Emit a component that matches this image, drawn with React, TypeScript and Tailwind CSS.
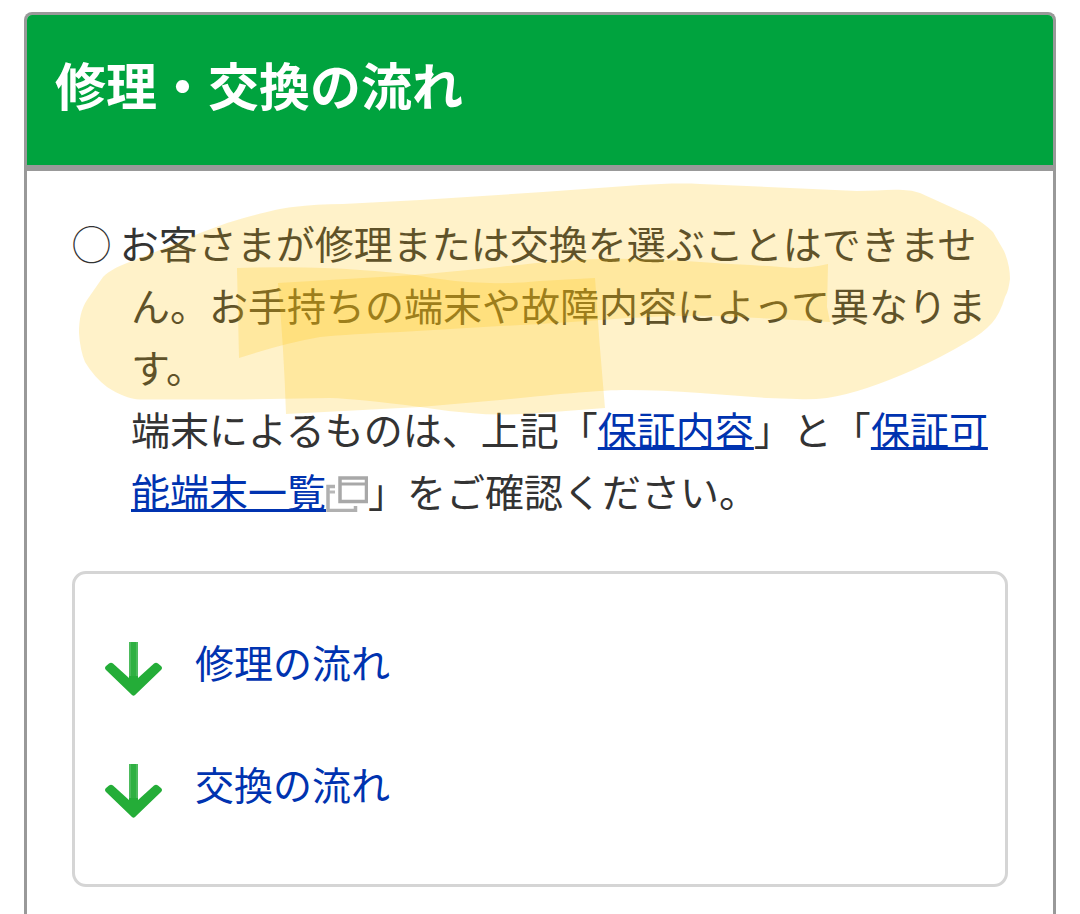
import React from "react";

const flows = [
  { id: "repair", label: "修理の流れ" },
  { id: "exchange", label: "交換の流れ" },
];

function NewWindowIcon() {
  return (
    <svg
      className="inline-block h-9 w-[42px] align-[-5px]"
      viewBox="0 0 42 36"
      fill="none"
      role="img"
      aria-label="別ウィンドウで開く"
    >
      <path d="M9 10.5H2V34.5H29.500V30" stroke="#b0b0b0" strokeWidth="3.500" />
      <path d="M3 16H9" stroke="#b8b8b8" strokeWidth="3" />
      <path d="M14 2H40.500V25.500H14Z" stroke="#a8a8a8" strokeWidth="3.500" />
      <path d="M15 8H40" stroke="#a8a8a8" strokeWidth="3" />
    </svg>
  );
}

function DownArrow() {
  return (
    <svg className="mt-3 h-[54px] w-[57px] shrink-0" viewBox="0 0 57 54" aria-hidden="true">
      <path d="M24 0H33V42H24Z" fill="#4dbb5d" />
      <path d="M26 0H31V42H26Z" fill="#2fb042" />
      <path
        d="M1 28Q-1 26 1 24L4 21.500Q6 20 8 21.500L24 36V34H33V36L49 21.500Q51 20 53 21.500L56 24Q58 26 56 28L30 53Q28.500 54.500 27 53Z"
        fill="#24ad38"
      />
    </svg>
  );
}

function Highlighter() {
  return (
    <svg
      className="pointer-events-none absolute inset-x-0 top-0 w-full"
      viewBox="27 171 1026 260"
      aria-hidden="true"
    >
      <g fill="#fdc507" fillOpacity="0.22">
        <path d="M79 333C79 320 81 309 87 300L103 277C109 271 117 267 127 263L160 250L200 233L227 223C254 215 276 209 293 207C309 205 325 204 343 204L420 200L543 192L640 185C660 184 680 183 700 184L857 191C875 191 890 189 903 190Q912 190 920 193L973 217Q985 224 993 232L1004 251C1008 260 1010 270 1010 279C1009 286 1008 292 1005 297Q1000 314 992 323Q982 334 967 342Q942 357 913 370Q888 381 867 388Q846 395 827 398Q811 400 797 399L767 398L700 393Q662 390 627 390C600 390 560 394 500 400L420 407Q360 399 330 398L240 399.500H140C130 399 119 395 107 387Q94 377 85 362Q80 350 79 333Z" />
        <path d="M237 268Q310 266 360 270Q390 272 415 275L500 267Q560 260 600 259Q640 258 700 262Q765 266 795 268Q811 268 828 264L827 307L830 322Q765 318 715 316Q670 315 600 320Q530 325 500 326L400 332Q350 334 320 337Q285 343 239 358Z" />
        <path d="M278 283L415 275Q450 282 490 283Q510 284 540 281L595 278Q599 342 605 408L540 413Q500 416 470 413Q445 411 420 407L286 414Q284 350 278 283Z" />
      </g>
    </svg>
  );
}

export default function App() {
  return (
    <main className="flex min-h-screen flex-col bg-white px-6 pt-3 font-['Noto_Sans_CJK_JP','Noto_Sans',sans-serif] text-[39px] leading-[62px] text-[#333]">
      <section className="flex grow flex-col rounded-t-lg border-[3px] border-b-0 border-[#999]">
        <header className="rounded-t-[5px] border-b-[6px] border-[#999] bg-[#00a33e] px-7 pt-7 pb-10">
          <h1 className="text-[51px] leading-[82px] font-bold text-white" lang="ja">
            修理・交換の流れ
          </h1>
        </header>

        <div className="relative px-[45px] pt-10 pb-6" lang="ja">
          <p className="pl-[59px] -indent-[59px]">
            ◯ お客さまが修理または交換を選ぶことはできません。お手持ちの端末や故障内容によって異なります。
          </p>
          <p className="pl-[59px]">
            端末によるものは、上記「
            <a href="#coverage" className="text-[#0033b0] underline decoration-[3px]">保証内容</a>
            」と「
            <a href="#devices" className="text-[#0033b0] underline decoration-[3px]">保証可能端末一覧</a>
            <NewWindowIcon />
            」をご確認ください。
          </p>
          <Highlighter />

          <nav className="mt-[50px] rounded-[14px] border-[3px] border-[#d5d5d5] px-[30px] pt-14 pb-[66px]">
            <ul className="flex flex-col gap-14">
              {flows.map((flow) => (
                <li key={flow.id}>
                  <a href={`#${flow.id}`} className="flex items-start gap-[33px] text-[#0033b0]">
                    <DownArrow />
                    <span>{flow.label}</span>
                  </a>
                </li>
              ))}
            </ul>
          </nav>
        </div>
      </section>
    </main>
  );
}
